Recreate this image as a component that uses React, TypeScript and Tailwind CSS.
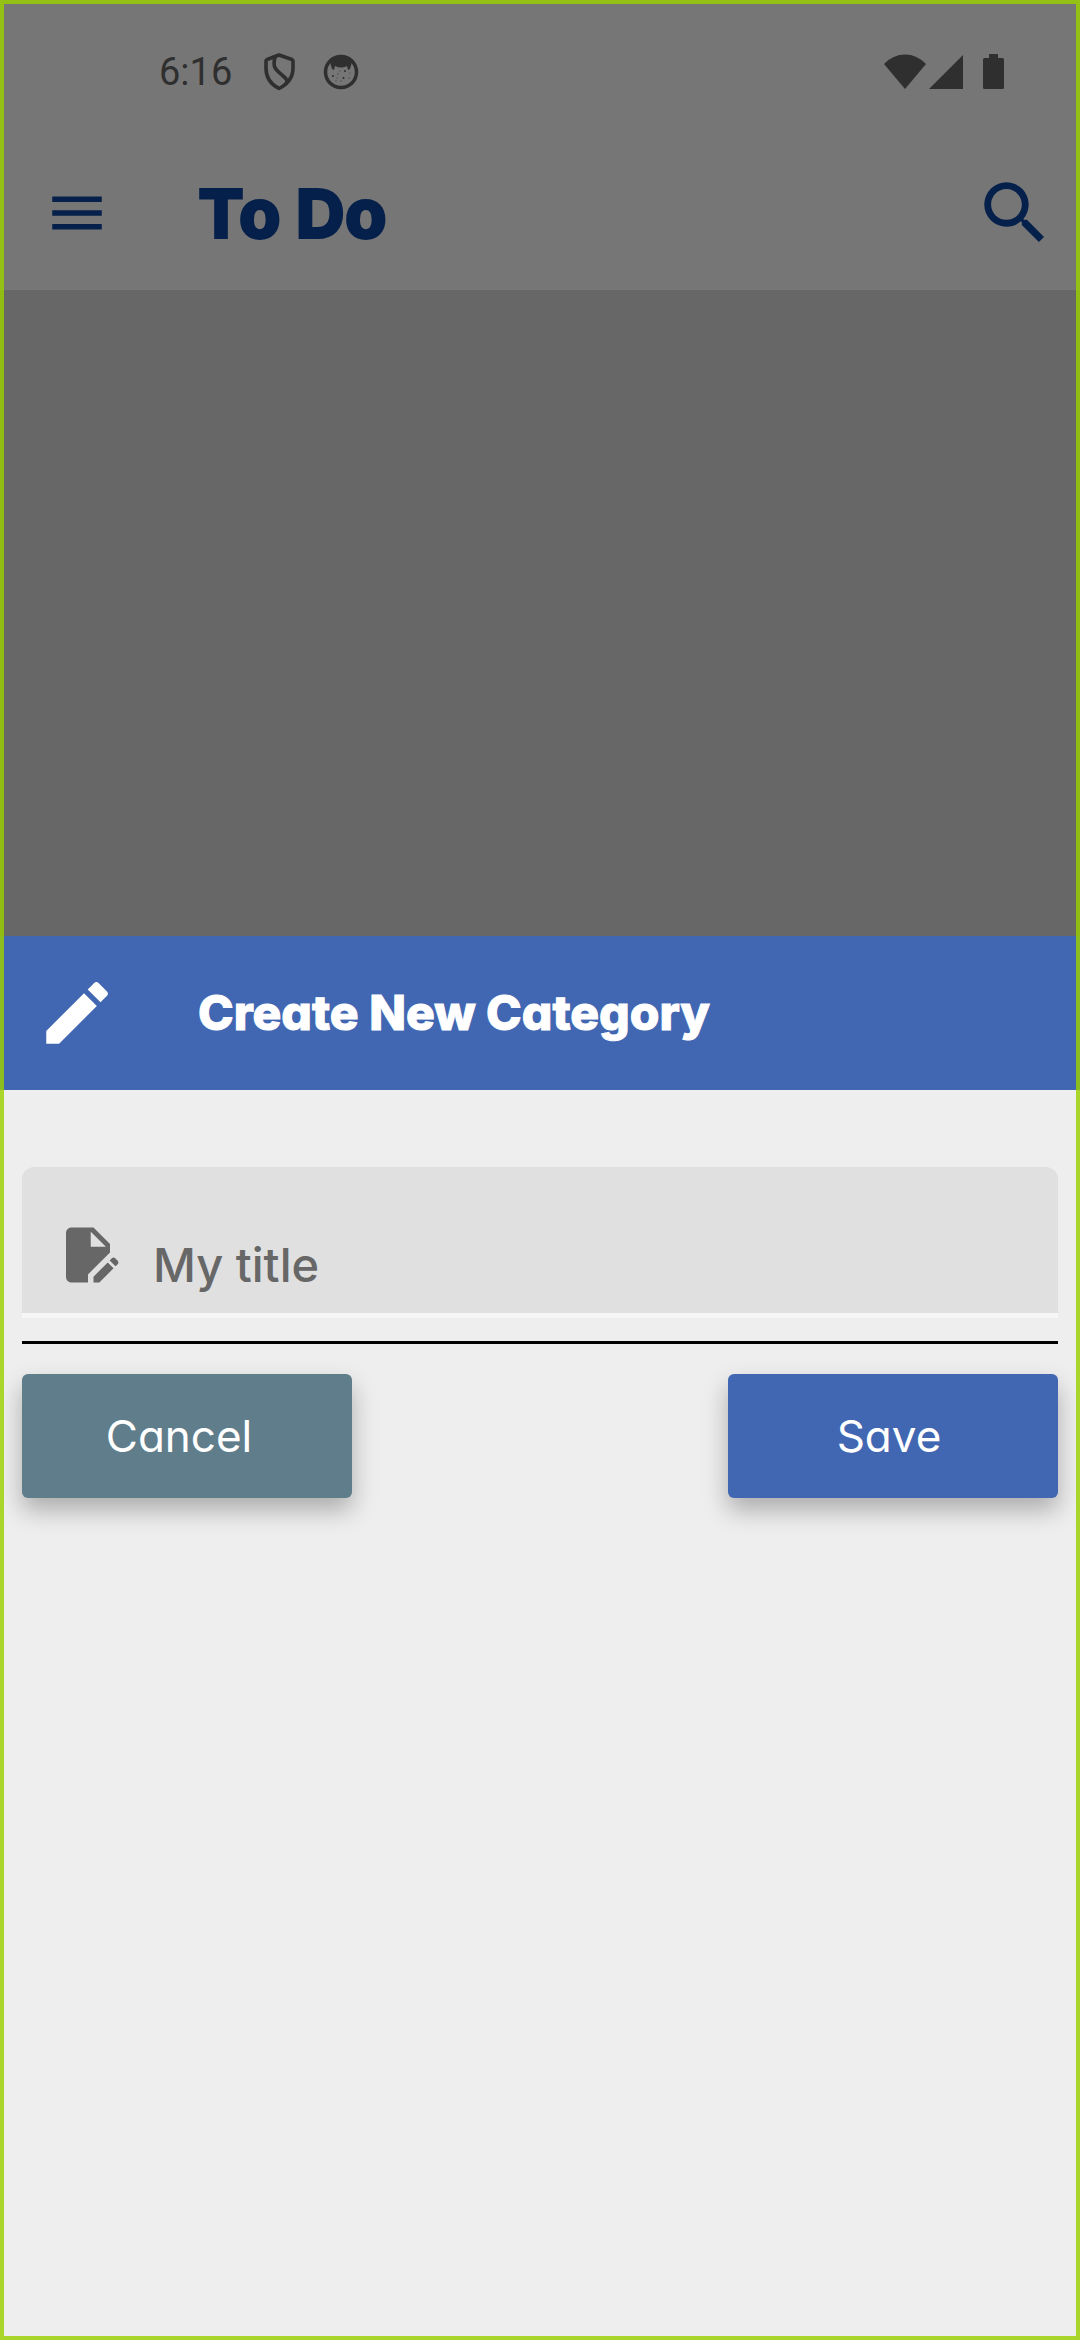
import { MdMenu, MdSearch, MdEdit, MdEditDocument } from "react-icons/md";

function StatusBar() {
  return (
    <div className="flex h-36 items-center justify-between pr-[76px] pl-[159px] text-[#2f2f2f]">
      <div className="flex items-center">
        <span className="w-[78px] font-[Roboto,sans-serif] text-[38px] leading-none">6:16</span>
        <svg className="ml-[24px] h-[40px] w-[36px]" viewBox="0 0 36 40" fill="none" stroke="currentColor" strokeWidth="3.600" strokeLinejoin="round" aria-hidden="true">
          <path d="M18 3 L31 7.500 Q32 8 32 9 V16 C32 26 27 32 18 36.500 C9 32 5 26 5 16 V9 Q5 8 6 7.500 Z" />
          <path d="M14 5 C11 17 16 18 21 23 C26 27 27 29 25 32" />
        </svg>
        <svg className="ml-[26px] h-[36px] w-[36px]" viewBox="0 0 36 36" aria-hidden="true">
          <circle cx="18" cy="18" r="15.500" fill="none" stroke="currentColor" strokeWidth="3.500" />
          <path d="M7 8 C12 1 24 1 29 8 L27 15 L25 16 L24 12 C20 14 16 14 12 12 L11 16 L9 15 Z" fill="currentColor" />
          <g fill="currentColor">
            <circle cx="10" cy="22" r="1" /><circle cx="22" cy="17" r="1" /><circle cx="20.500" cy="24" r="1" />
            <circle cx="15" cy="20" r=".6" /><circle cx="13" cy="27" r=".6" /><circle cx="18" cy="27" r=".6" />
            <circle cx="26" cy="24" r=".6" /><circle cx="17" cy="17" r=".5" /><circle cx="27" cy="19" r=".5" /><circle cx="14" cy="24" r=".5" />
          </g>
        </svg>
      </div>
      <div className="flex items-center">
        <svg className="h-[36px] w-[42px]" viewBox="0 0 42 36" fill="currentColor" aria-hidden="true">
          <path d="M0 10 Q9 0.500 21 0.500 T42 10 L21 35 Z" />
        </svg>
        <svg className="ml-[3px] h-[36px] w-[34px]" viewBox="0 0 34 36" fill="currentColor" aria-hidden="true">
          <path d="M34 1 V35 H0 Z" />
        </svg>
        <svg className="ml-[20px] h-[36px] w-[21px]" viewBox="0 0 21 36" fill="currentColor" aria-hidden="true">
          <path d="M6 0 H15 V4 H19.500 Q21 4 21 5.500 V33.500 Q21 35 19.500 35 H1.500 Q0 35 0 33.500 V5.500 Q0 4 1.500 4 H6 Z" />
        </svg>
      </div>
    </div>
  );
}

export default function App() {
  return (
    <div className="relative flex min-h-screen flex-col bg-[#676767] font-[Inter,sans-serif] [font-feature-settings:'cv11']">
      <header className="bg-[#767676]">
        <StatusBar />
        <div className="flex h-[146px] items-center pr-[24px] pb-2 pl-[44px] text-[#05204a]">
          <button type="button" aria-label="Menu" className="flex">
            <MdMenu className="size-[66px]" />
          </button>
          <h1 className="ml-[88px] flex-1 text-[68px] leading-none font-extrabold [-webkit-text-stroke:2px_currentColor]">To Do</h1>
          <button type="button" aria-label="Search" className="flex">
            <MdSearch className="size-[82px]" />
          </button>
        </div>
      </header>

      <section role="dialog" aria-labelledby="sheet-title" className="mt-[646px] flex-1 bg-[#eeeeee]">
        <div className="flex h-[154px] items-center bg-[#4267b2] pl-[36px] text-white">
          <MdEdit className="size-[82px]" aria-hidden="true" />
          <h2 id="sheet-title" className="ml-[80px] text-[48px] leading-none font-extrabold [-webkit-text-stroke:1px_currentColor]">
            Create New Category
          </h2>
        </div>
        <form className="px-[22px] pt-[77px]" onSubmit={(e) => e.preventDefault()}>
          <div className="border-b-[3px] border-black pb-[23px]">
            <label className="flex h-[151px] items-center rounded-t-xl border-b-[5px] border-[#f6f6f6] bg-[#e0e0e0] pl-[33px] text-[#676767]">
              <MdEditDocument className="mt-[30px] size-[66px] shrink-0" aria-hidden="true" />
              <input
                type="text"
                aria-label="Category title"
                placeholder="My title"
                className="mt-12 ml-8 min-w-0 flex-1 bg-transparent text-[47px] leading-none font-medium outline-none placeholder:text-[#676767]"
              />
            </label>
          </div>
          <div className="mt-[30px] flex justify-between text-[44px] leading-none text-white">
            <button type="button" className="h-[124px] w-[330px] rounded-md bg-[#607d8b] pr-4 shadow-[0_12px_24px_rgba(0,0,0,0.28)]">
              Cancel
            </button>
            <button type="submit" className="h-[124px] w-[330px] rounded-md bg-[#4267b2] pr-2 shadow-[0_12px_24px_rgba(0,0,0,0.28)]">
              Save
            </button>
          </div>
        </form>
      </section>
      <div className="pointer-events-none absolute inset-0 border-4 border-[rgba(155,207,0,0.82)]" />
    </div>
  );
}
